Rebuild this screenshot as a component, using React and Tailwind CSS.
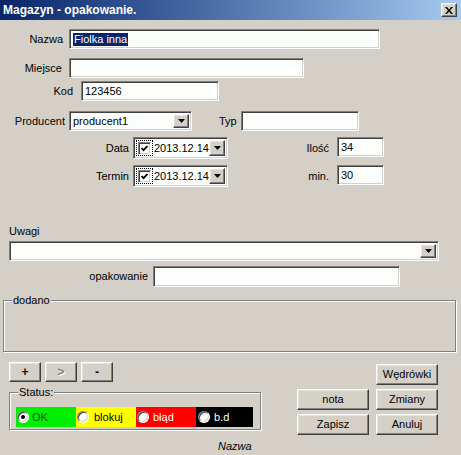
import React from "react";

const sunken =
  "border border-t-[#808080] border-l-[#808080] border-r-white border-b-white shadow-[inset_1px_1px_0_#404040,inset_-1px_-1px_0_#d4d0c8] bg-[#fcfefb]";
const raised =
  "bg-[#d4d0c8] border border-t-white border-l-white border-r-[#404040] border-b-[#404040] shadow-[inset_-1px_-1px_0_#808080,inset_1px_1px_0_#e6e4df]";
const etched =
  "border border-[#808080] shadow-[inset_1px_1px_0_#ffffff,1px_1px_0_#ffffff]";

function Arrow() {
  return (
    <svg width="7" height="4" viewBox="0 0 7 4">
      <path d="M0 0h7L3.5 4z" fill="#000" />
    </svg>
  );
}

function DropBtn() {
  return (
    <div className={`${raised} w-[16px] shrink-0 flex items-center justify-center`}>
      <Arrow />
    </div>
  );
}

function Check() {
  return (
    <div className="w-[13px] h-[13px] bg-white border border-t-[#808080] border-l-[#808080] border-r-white border-b-white shadow-[inset_1px_1px_0_#404040,inset_-1px_-1px_0_#d4d0c8] flex items-center justify-center">
      <svg width="7" height="7" viewBox="0 0 7 7">
        <path d="M0.5 3 L2.6 5.2 L6.5 1" stroke="#000" strokeWidth="1.8" fill="none" />
      </svg>
    </div>
  );
}

function DatePick() {
  return (
    <div className={`${sunken} ml-[4px] w-[95px] h-[22px] p-[1px] flex items-stretch`}>
      <div className="ml-[1px] my-[1px] w-[17px] border border-dotted border-black flex items-center justify-center">
        <Check />
      </div>
      <span className="flex-1 flex items-center pl-[1px]">2013.12.14</span>
      <div className="py-[1px] flex pr-[1px]">
        <DropBtn />
      </div>
    </div>
  );
}

function Radio({ on }) {
  return (
    <div className="w-[12px] h-[12px] rounded-full bg-white border border-t-[#808080] border-l-[#808080] border-r-white border-b-white shadow-[inset_1px_1px_0_#404040,inset_-1px_-1px_0_#d4d0c8] flex items-center justify-center shrink-0">
      {on && <div className="w-[4px] h-[4px] rounded-full bg-black" />}
    </div>
  );
}

export default function App() {
  return (
    <div className="w-[461px] h-[455px] bg-[#d4d0c8] overflow-hidden font-['Liberation_Sans',Arial,sans-serif] text-[11px] leading-[13px] text-black flex flex-col">
      {/* title bar */}
      <div className="h-[20px] shrink-0 bg-linear-to-r from-[#0a246a] to-[#a6caf0] flex items-center pl-[3px] pr-[4px]">
        <span className="text-white font-bold text-[12px] leading-[14px]">Magazyn - opakowanie.</span>
        <div className={`ml-auto ${raised} w-[16px] h-[14px] flex items-center justify-center`}>
          <svg width="8" height="7" viewBox="0 0 8 7">
            <path d="M0 0h2l2 2.4L6 0h2L5 3.5 8 7H6L4 4.6 2 7H0l3-3.5z" fill="#000" />
          </svg>
        </div>
      </div>

      {/* Nazwa */}
      <div className="mt-[9px] h-[20px] flex items-center">
        <span className="w-[63px] text-right">Nazwa</span>
        <div className={`${sunken} ml-[6px] w-[311px] h-[20px] flex items-center pl-[3px]`}>
          <span className="bg-[#0a246a] text-white px-[1px]">Fiolka inna</span>
        </div>
      </div>

      {/* Miejsce */}
      <div className="mt-[9px] h-[20px] flex items-center">
        <span className="w-[62px] text-right">Miejsce</span>
        <div className={`${sunken} ml-[7px] w-[235px] h-[20px]`} />
      </div>

      {/* Kod */}
      <div className="mt-[3px] h-[20px] flex items-center">
        <span className="w-[73px] text-right">Kod</span>
        <div className={`${sunken} ml-[8px] w-[138px] h-[20px] flex items-center pl-[3px]`}>123456</div>
      </div>

      {/* Producent / Typ */}
      <div className="mt-[10px] h-[20px] flex items-center">
        <span className="w-[65px] text-right">Producent</span>
        <div className={`${sunken} ml-[4px] w-[123px] h-[20px] p-[1px] flex items-stretch`}>
          <span className="flex-1 flex items-center pl-[2px]">producent1</span>
          <div className="flex py-[1px] pr-[1px]">
            <DropBtn />
          </div>
        </div>
        <span className="ml-[27px] w-[22px]">Typ</span>
        <div className={`${sunken} w-[118px] h-[20px]`} />
      </div>

      {/* Data / Ilość */}
      <div className="mt-[6px] h-[22px] flex items-start">
        <span className="w-[129px] text-right self-center">Data</span>
        <DatePick />
        <span className="w-[101px] text-right self-center">Ilość</span>
        <div className={`${sunken} ml-[8px] w-[47px] h-[20px] flex items-center pl-[3px]`}>34</div>
      </div>

      {/* Termin / min. */}
      <div className="mt-[6px] h-[22px] flex items-start">
        <span className="w-[129px] text-right self-center">Termin</span>
        <DatePick />
        <span className="w-[101px] text-right self-center">min.</span>
        <div className={`${sunken} ml-[8px] w-[47px] h-[20px] flex items-center pl-[3px]`}>30</div>
      </div>

      {/* Uwagi */}
      <div className="mt-[38px] ml-[9px] h-[13px]">Uwagi</div>
      <div className={`${sunken} mt-[3px] ml-[9px] w-[430px] h-[20px] p-[1px] flex items-stretch`}>
        <span className="flex-1" />
        <div className="flex py-[1px] pr-[1px]">
          <DropBtn />
        </div>
      </div>

      {/* opakowanie */}
      <div className="mt-[5px] h-[21px] flex items-center">
        <span className="w-[148px] text-right">opakowanie</span>
        <div className={`${sunken} ml-[5px] w-[247px] h-[21px]`} />
      </div>

      {/* dodano group */}
      <div className={`${etched} relative mt-[13px] ml-[3px] w-[453px] h-[52px] shrink-0`}>
        <span className="absolute top-[-7px] left-[8px] px-[1px] bg-[#d4d0c8]">dodano</span>
      </div>

      {/* bottom area */}
      <div className="mt-[10px] flex">
        <div className="ml-[9px] w-[252px] flex flex-col">
          <div className="flex gap-[4px]">
            <div className={`${raised} w-[32px] h-[20px] flex items-center justify-center font-bold text-[12px]`}>+</div>
            <div className={`${raised} w-[32px] h-[20px] flex items-center justify-center font-bold text-[12px] text-[#808080] [text-shadow:1px_1px_0_#ffffff]`}>&gt;</div>
            <div className={`${raised} w-[32px] h-[20px] flex items-center justify-center font-bold text-[12px]`}>-</div>
          </div>
          <div className={`${etched} relative mt-[10px] w-[252px] h-[38px]`}>
            <span className="absolute top-[-7px] left-[8px] px-[1px] bg-[#d4d0c8]">Status:</span>
            <div className="ml-[6px] mt-[14px] flex h-[20px] w-[237px]">
              <div className="w-[60px] bg-[#00f000] flex items-center pl-[1px] gap-[3px]">
                <Radio on />
                <span className="text-[#145214]">OK</span>
              </div>
              <div className="w-[60px] bg-[#ffff00] flex items-center pl-[1px] gap-[5px]">
                <Radio />
                <span>blokuj</span>
              </div>
              <div className="w-[60px] bg-[#ff0000] flex items-center pl-[1px] gap-[4px]">
                <Radio />
                <span className="text-white">błąd</span>
              </div>
              <div className="w-[57px] bg-black flex items-center pl-[2px] gap-[4px]">
                <Radio />
                <span className="text-white">b.d</span>
              </div>
            </div>
          </div>
          <div className="mt-[10px] pl-[209px] italic">Nazwa</div>
        </div>

        <div className="ml-[36px] mt-[2px] flex flex-col gap-[4px]">
          <div className="flex">
            <div className={`${raised} ml-[79px] w-[62px] h-[21px] flex items-center justify-center`}>Wędrówki</div>
          </div>
          <div className="flex gap-[7px]">
            <div className={`${raised} w-[72px] h-[21px] flex items-center justify-center`}>nota</div>
            <div className={`${raised} w-[62px] h-[21px] flex items-center justify-center`}>Zmiany</div>
          </div>
          <div className="flex gap-[7px]">
            <div className={`${raised} w-[72px] h-[21px] flex items-center justify-center`}>Zapisz</div>
            <div className={`${raised} w-[62px] h-[21px] flex items-center justify-center`}>Anuluj</div>
          </div>
        </div>
      </div>
    </div>
  );
}
